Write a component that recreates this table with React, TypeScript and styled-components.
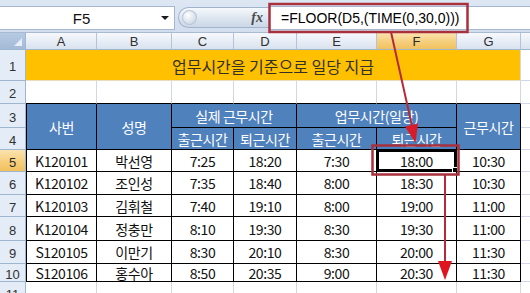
import React from 'react';
import styled, { createGlobalStyle, css } from 'styled-components';

const GlobalStyle = createGlobalStyle`
  html, body {
    margin: 0;
    padding: 0;
    background: #ffffff;
  }
  body {
    font-family: 'Noto Sans CJK KR', 'Noto Sans', sans-serif;
  }
`;

const rows = [
  ['K120101', '박선영', '7:25', '18:20', '7:30', '18:00', '10:30'],
  ['K120102', '조인성', '7:35', '18:40', '8:00', '18:30', '10:30'],
  ['K120103', '김휘철', '7:40', '19:10', '8:00', '19:00', '11:00'],
  ['K120104', '정충만', '8:10', '19:30', '8:30', '19:30', '11:00'],
  ['S120105', '이만기', '8:30', '20:10', '8:30', '20:00', '11:30'],
  ['S120106', '홍수아', '8:50', '20:35', '9:00', '20:30', '11:30'],
];

const letters = ['A', 'B', 'C', 'D', 'E', 'F', 'G', ''];

const Screen = styled.div`
  position: relative;
  width: 530px;
  height: 293px;
  overflow: hidden;
  background: #fff;
`;

/* ---------- formula bar ---------- */

const FormulaBar = styled.div`
  display: flex;
  align-items: stretch;
  height: 33px;
  box-sizing: border-box;
  padding: 6px 0 2px;
  background: linear-gradient(#dde7f4, #d2deee);
  border-bottom: 1px solid #a9bbd3;
`;

const NameBox = styled.div`
  display: flex;
  align-items: center;
  width: 175px;
  box-sizing: border-box;
  background: #fff;
  border: 1px solid #a5b7cf;
  border-left: none;
  font-family: 'Liberation Sans', Arial, sans-serif;
  font-size: 15px;
  color: #111;
`;

const NameText = styled.span`
  flex: 1;
  text-align: center;
  padding-left: 2px;
`;

const Caret = styled.span`
  width: 0;
  height: 0;
  margin-right: 5px;
  border-left: 4px solid transparent;
  border-right: 4px solid transparent;
  border-top: 4px solid #1a1a1a;
`;

const FxPill = styled.div`
  display: flex;
  align-items: center;
  justify-content: space-between;
  width: 91px;
  margin: 1px 0 2px 3px;
  box-sizing: border-box;
  padding: 0 6px 0 3px;
  border: 1px solid #a2b4cb;
  border-right: none;
  border-radius: 12px 0 0 12px;
  background: linear-gradient(#f6f9fc, #dce5f0 55%, #cbd8e8);
`;

const Dimple = styled.span`
  width: 15px;
  height: 15px;
  border-radius: 50%;
  background: radial-gradient(circle at 40% 35%, #ffffff, #d5dee9 60%, #b7c5d6);
  box-shadow: inset 0 0 0 1px #b9c7d8;
`;

const FxLabel = styled.span`
  font-family: 'Liberation Serif', 'Times New Roman', serif;
  font-style: italic;
  font-weight: bold;
  font-size: 14px;
  color: #4a4a4a;
`;

const FormulaInput = styled.div`
  flex: 1;
  display: flex;
  align-items: center;
  padding-left: 11px;
  background: #fff;
  border: 1px solid #a5b7cf;
  border-right: none;
  font-family: 'Liberation Sans', Arial, sans-serif;
  font-size: 14px;
  color: #000;
`;

/* ---------- sheet ---------- */

const Sheet = styled.div`
  display: grid;
  grid-template-columns: 26px 71px 75px 62px 63px 80px 80px 64px 64px;
  grid-template-rows: 17px 31px 23px 24px 22px 22px 23px 22px 24px 23px 18px 23px;
`;

type Place = { $col: string; $row: string };

const placed = css<Place>`
  grid-column: ${(p) => p.$col};
  grid-row: ${(p) => p.$row};
  box-sizing: border-box;
  display: flex;
  align-items: center;
  justify-content: center;
  min-width: 0;
  overflow: hidden;
  white-space: nowrap;
`;

const activeHead = css`
  background: linear-gradient(#fbe3b0, #f6cf7c 55%, #f1c15f);
  color: #2a2a2a;
`;

const Corner = styled.div<Place>`
  ${placed};
  position: relative;
  background: linear-gradient(#b7cae2, #a3bad8);
  border-right: 1px solid #9eb6ce;
  border-bottom: 1px solid #9eb6ce;

  &::after {
    content: '';
    position: absolute;
    right: 3px;
    bottom: 3px;
    border-left: 8px solid transparent;
    border-bottom: 8px solid #e8eef7;
  }
`;

const ColHead = styled.div<Place & { $active?: boolean }>`
  ${placed};
  padding-top: 1px;
  background: linear-gradient(#f7f9fc, #e4ebf5 60%, #d9e2ee);
  border-right: 1px solid #b4c4d8;
  border-bottom: 1px solid #9eb6ce;
  font-family: 'Liberation Sans', Arial, sans-serif;
  font-size: 13px;
  color: #303030;
  ${(p) => p.$active && activeHead};
`;

const RowHead = styled.div<Place & { $active?: boolean }>`
  ${placed};
  padding-top: 3px;
  background: #e4ecf7;
  border-right: 1px solid #9eb6ce;
  border-bottom: 1px solid #9eb6ce;
  font-family: 'Liberation Sans', Arial, sans-serif;
  font-size: 13px;
  color: #303030;
  ${(p) => p.$active && activeHead};
`;

const GridCell = styled.div<Place & { $edge?: boolean }>`
  ${placed};
  background: #fff;
  border-right: 1px solid #d0d7e5;
  border-bottom: 1px solid ${(p) => (p.$edge ? '#000' : '#d0d7e5')};
`;

const TitleCell = styled.div<Place>`
  ${placed};
  padding-top: 2px;
  background: #ffc000;
  border-right: 1px solid #d0d7e5;
  border-bottom: 1px solid #e6dcc0;
  font-size: 16px;
  color: #33302a;
`;

const tableBorders = css<{ $lead?: boolean }>`
  border-right: 1px solid #000;
  border-bottom: 1px solid #000;
  border-left: ${(p) => (p.$lead ? '1px solid #000' : 'none')};
  font-size: 14px;
  letter-spacing: -0.4px;
`;

const HeadCell = styled.div<Place & { $lead?: boolean }>`
  ${placed};
  ${tableBorders};
  background: #4f81bd;
  color: #fff;
`;

const DataCell = styled.div<Place & { $lead?: boolean; $sel?: boolean }>`
  ${placed};
  ${tableBorders};
  position: relative;
  background: #fff;
  color: #111;
  overflow: visible;
  ${(p) =>
    p.$sel &&
    css`
      box-shadow: inset 0 0 0 2px #000;
      &::after {
        content: '';
        position: absolute;
        right: -3px;
        bottom: -3px;
        width: 5px;
        height: 5px;
        background: #000;
        border: 1px solid #fff;
      }
    `};
`;

const Overlay = styled.svg`
  position: absolute;
  left: 0;
  top: 0;
  width: 530px;
  height: 293px;
  pointer-events: none;
`;

const App = () => {
  const gridRow = (r: number, edge = false) =>
    letters.map((_, i) => (
      <GridCell key={`g${r}-${i}`} $col={`${i + 2}`} $row={`${r + 1}`} $edge={edge && i < 7} />
    ));

  return (
    <Screen>
      <GlobalStyle />
      <FormulaBar>
        <NameBox>
          <NameText>F5</NameText>
          <Caret />
        </NameBox>
        <FxPill>
          <Dimple />
          <FxLabel>fx</FxLabel>
        </FxPill>
        <FormulaInput>=FLOOR(D5,(TIME(0,30,0)))</FormulaInput>
      </FormulaBar>

      <Sheet>
        <Corner $col="1" $row="1" />
        {letters.map((l, i) => (
          <ColHead key={`c${i}`} $col={`${i + 2}`} $row="1" $active={l === 'F'}>
            {l}
          </ColHead>
        ))}

        {Array.from({ length: 11 }, (_, i) => (
          <RowHead key={`r${i}`} $col="1" $row={`${i + 2}`} $active={i + 1 === 5}>
            {i + 1}
          </RowHead>
        ))}

        <TitleCell $col="2 / span 7" $row="2">
          업무시간을 기준으로 일당 지급
        </TitleCell>
        <GridCell $col="9" $row="2" />

        {gridRow(2, true)}

        <HeadCell $col="2" $row="4 / span 2" $lead>사번</HeadCell>
        <HeadCell $col="3" $row="4 / span 2">성명</HeadCell>
        <HeadCell $col="4 / span 2" $row="4">실제 근무시간</HeadCell>
        <HeadCell $col="6 / span 2" $row="4">업무시간(일당)</HeadCell>
        <HeadCell $col="8" $row="4 / span 2">근무시간</HeadCell>
        <HeadCell $col="4" $row="5">출근시간</HeadCell>
        <HeadCell $col="5" $row="5">퇴근시간</HeadCell>
        <HeadCell $col="6" $row="5">출근시간</HeadCell>
        <HeadCell $col="7" $row="5">퇴근시간</HeadCell>
        <GridCell $col="9" $row="4" />
        <GridCell $col="9" $row="5" />

        {rows.map((row, r) => (
          <React.Fragment key={`d${r}`}>
            {row.map((v, c) => (
              <DataCell
                key={`d${r}-${c}`}
                $col={`${c + 2}`}
                $row={`${r + 6}`}
                $lead={c === 0}
                $sel={r === 0 && c === 5}
              >
                {v}
              </DataCell>
            ))}
            <GridCell $col="9" $row={`${r + 6}`} />
          </React.Fragment>
        ))}

        {gridRow(11)}
      </Sheet>

      <Overlay viewBox="0 0 530 293">
        <rect x="269.5" y="4" width="198" height="28" fill="none" stroke="#a9313c" strokeWidth="2.5" />
        <rect x="372.5" y="145.5" width="86" height="29" fill="none" stroke="#a9313c" strokeWidth="2.5" />
        <line x1="391" y1="32" x2="412" y2="126" stroke="#b52a38" strokeWidth="2" />
        <polygon points="405,126.5 418,123.5 415.5,143" fill="#d81b28" />
        <line x1="445" y1="175" x2="445" y2="263" stroke="#b52a38" strokeWidth="2" />
        <polygon points="438,261 452,261 445,280" fill="#e0141e" />
      </Overlay>
    </Screen>
  );
};

export default App;
